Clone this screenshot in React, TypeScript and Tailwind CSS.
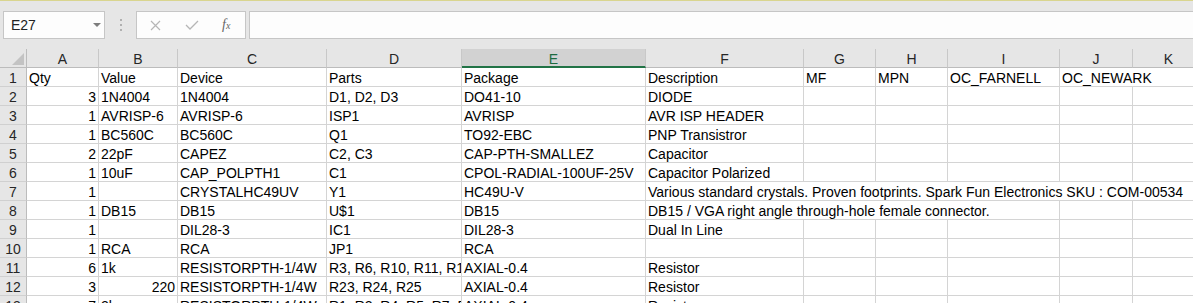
import React from "react";

const GRID = "#d4d4d4";
const COLS = ["A", "B", "C", "D", "E", "F", "G", "H", "I", "J", "K"];

type Cell = { t?: string; right?: boolean; span?: number };

// one entry per row, A..K (spans swallow the cells they cover)
const rows: Cell[][] = [
  [{ t: "Qty" }, { t: "Value" }, { t: "Device" }, { t: "Parts" }, { t: "Package" }, { t: "Description" }, { t: "MF" }, { t: "MPN" }, { t: "OC_FARNELL" }, { t: "OC_NEWARK", span: 2 }],
  [{ t: "3", right: true }, { t: "1N4004" }, { t: "1N4004" }, { t: "D1, D2, D3" }, { t: "DO41-10" }, { t: "DIODE" }, {}, {}, {}, {}, {}],
  [{ t: "1", right: true }, { t: "AVRISP-6" }, { t: "AVRISP-6" }, { t: "ISP1" }, { t: "AVRISP" }, { t: "AVR ISP HEADER" }, {}, {}, {}, {}, {}],
  [{ t: "1", right: true }, { t: "BC560C" }, { t: "BC560C" }, { t: "Q1" }, { t: "TO92-EBC" }, { t: "PNP Transistror" }, {}, {}, {}, {}, {}],
  [{ t: "2", right: true }, { t: "22pF" }, { t: "CAPEZ" }, { t: "C2, C3" }, { t: "CAP-PTH-SMALLEZ" }, { t: "Capacitor" }, {}, {}, {}, {}, {}],
  [{ t: "1", right: true }, { t: "10uF" }, { t: "CAP_POLPTH1" }, { t: "C1" }, { t: "CPOL-RADIAL-100UF-25V" }, { t: "Capacitor Polarized" }, {}, {}, {}, {}, {}],
  [{ t: "1", right: true }, {}, { t: "CRYSTALHC49UV" }, { t: "Y1" }, { t: "HC49U-V" }, { t: "Various standard crystals. Proven footprints. Spark Fun Electronics SKU : COM-00534", span: 6 }],
  [{ t: "1", right: true }, { t: "DB15" }, { t: "DB15" }, { t: "U$1" }, { t: "DB15" }, { t: "DB15 / VGA right angle through-hole female connector.", span: 4 }, {}, {}],
  [{ t: "1", right: true }, {}, { t: "DIL28-3" }, { t: "IC1" }, { t: "DIL28-3" }, { t: "Dual In Line" }, {}, {}, {}, {}, {}],
  [{ t: "1", right: true }, { t: "RCA" }, { t: "RCA" }, { t: "JP1" }, { t: "RCA" }, {}, {}, {}, {}, {}, {}],
  [{ t: "6", right: true }, { t: "1k" }, { t: "RESISTORPTH-1/4W" }, { t: "R3, R6, R10, R11, R12" }, { t: "AXIAL-0.4" }, { t: "Resistor" }, {}, {}, {}, {}, {}],
  [{ t: "3", right: true }, { t: "220", right: true }, { t: "RESISTORPTH-1/4W" }, { t: "R23, R24, R25" }, { t: "AXIAL-0.4" }, { t: "Resistor" }, {}, {}, {}, {}, {}],
  [{ t: "7", right: true }, { t: "2k" }, { t: "RESISTORPTH-1/4W" }, { t: "R1, R2, R4, R5, R7, R8, R9" }, { t: "AXIAL-0.4" }, { t: "Resistor" }, {}, {}, {}, {}, {}],
];

const spanClass: Record<number, string> = { 1: "", 2: "col-span-2", 4: "col-span-4", 6: "col-span-6" };

function FormulaBar() {
  return (
    <div className="flex h-[49px] border-t border-[#d9d58f] py-[10px]">
      {/* name box */}
      <div className="relative ml-[3px] flex h-[28px] w-[102px] items-center border border-[#c6c6c6] bg-[#fdfdfd] pl-[7px] text-[14px] text-[#222]">
        E27
        <svg className="absolute left-[89px] top-[11px]" width="8" height="4" viewBox="0 0 8 4">
          <polygon points="0,0 8,0 4,4" fill="#7d7d7d" />
        </svg>
      </div>

      {/* grip */}
      <div className="flex w-[31px] flex-col items-center justify-center gap-[3px]">
        <span className="h-[2px] w-[2px] bg-[#b0b0b0]" />
        <span className="h-[2px] w-[2px] bg-[#b0b0b0]" />
        <span className="h-[2px] w-[2px] bg-[#b0b0b0]" />
      </div>

      {/* cancel / enter / fx */}
      <div className="flex h-[28px] w-[110px] items-center border border-[#c6c6c6] bg-[#fdfdfd]">
        <svg className="ml-[13px]" width="11" height="11" viewBox="0 0 11 11">
          <path d="M1 1 L10 10 M10 1 L1 10" stroke="#b6b6b6" strokeWidth="1.2" />
        </svg>
        <svg className="ml-[24px]" width="14" height="10" viewBox="0 0 14 10">
          <path d="M1 5 L5 9 L13 1" stroke="#b6b6b6" strokeWidth="1.3" fill="none" />
        </svg>
        <span className="ml-[23px] font-['Liberation_Serif',serif] text-[14px] italic leading-none text-[#666]">
          f<span className="text-[10px]">x</span>
        </span>
      </div>

      {/* formula input */}
      <div className="ml-[3px] h-[28px] flex-1 border-y border-l border-[#c6c6c6] bg-[#fdfdfd]" />
    </div>
  );
}

export default function App() {
  return (
    <div className="h-[303px] w-[1193px] overflow-hidden bg-[#e6e6e6] font-['Liberation_Sans',Arial,sans-serif] text-black">
      <FormulaBar />

      <div className="grid w-[1205px] grid-cols-[27px_72px_79px_149px_135px_184px_158px_72px_72px_112px_73px_72px]">
        {/* column headers */}
        <div className="relative h-[19px] border-r border-b border-[#bcbcbc] bg-[#e6e6e6]">
          <svg className="absolute left-[12px] top-[4px]" width="12" height="12" viewBox="0 0 12 12">
            <polygon points="12,0 12,12 0,12" fill="#c3c3c3" />
          </svg>
        </div>
        {COLS.map((c) =>
          c === "E" ? (
            <div
              key={c}
              className="h-[19px] border-r border-b-2 border-r-[#c8c8c8] border-b-[#217346] bg-[#d2d2d2] pt-[3px] text-center text-[14px] leading-[15px] text-[#1d6b40]"
            >
              {c}
            </div>
          ) : (
            <div
              key={c}
              className="h-[19px] border-r border-b border-r-[#c8c8c8] border-b-[#bcbcbc] bg-[#e6e6e6] pt-[3px] text-center text-[14px] leading-[15px] text-[#262626]"
            >
              {c}
            </div>
          )
        )}

        {/* data rows */}
        {rows.map((row, i) => (
          <React.Fragment key={i}>
            <div className="h-[19px] border-r border-b border-r-[#bcbcbc] border-b-[#d0d0d0] bg-[#e6e6e6] pt-[3px] text-center text-[14px] leading-[15px] text-[#262626]">
              {i + 1}
            </div>
            {row.map((cell, j) => (
              <div
                key={j}
                className={`h-[19px] overflow-x-clip whitespace-nowrap border-r border-b bg-white pt-[3px] text-[14px] leading-[15px] ${
                  cell.right ? "pr-[2px] text-right" : "pl-[2px]"
                } ${spanClass[cell.span ?? 1]}`}
                style={{ borderColor: GRID }}
              >
                {cell.t}
              </div>
            ))}
          </React.Fragment>
        ))}
      </div>
    </div>
  );
}
